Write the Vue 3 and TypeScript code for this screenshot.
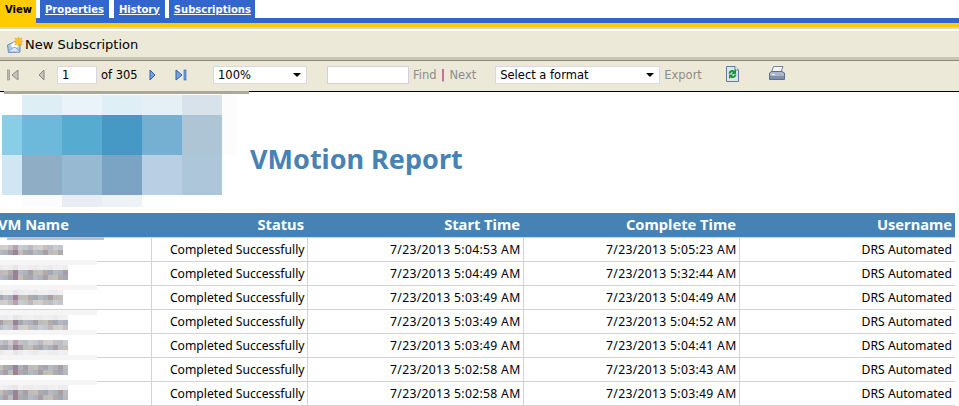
<script setup lang="ts">
const tabs = ['View', 'Properties', 'History', 'Subscriptions']
const logo = [
  '#fff', '#deeef5', '#ebf3fa', '#deeff6', '#e5eff6', '#d7e2ea', '#fcfcfc',
  '#88cee6', '#6cb9dc', '#55abd0', '#4799c5', '#75b0d2', '#aec5d5', '#fcfcfc',
  '#d0e6f3', '#8fadc5', '#98b9d2', '#7ba4c4', '#b9cfe4', '#adc6d9', '#fff',
  '#fff', '#fbfcfe', '#e9ecf2', '#eef1f6', '#fefefe', '#fff', '#fff',
]
const rows = [
  { start: '7/23/2013 5:04:53 AM', end: '7/23/2013 5:05:23 AM', band: -1, bandH: 3, top: 7, cols: 13, tones: [1, 0] },
  { start: '7/23/2013 5:04:49 AM', end: '7/23/2013 5:32:44 AM', band: -2, bandH: 5, top: 3, cols: 14, tones: [3, 0, 0] },
  { start: '7/23/2013 5:03:49 AM', end: '7/23/2013 5:04:49 AM', band: -1, bandH: 5, top: 4, cols: 13, tones: [3, 0, 1] },
  { start: '7/23/2013 5:03:49 AM', end: '7/23/2013 5:04:52 AM', band: 0, bandH: 5, top: 5, cols: 14, tones: [3, 0, 1] },
  { start: '7/23/2013 5:03:49 AM', end: '7/23/2013 5:04:41 AM', band: -4, bandH: 5, top: 6, cols: 14, tones: [1, 0, 3] },
  { start: '7/23/2013 5:02:58 AM', end: '7/23/2013 5:03:43 AM', band: -3, bandH: 5, top: 7, cols: 14, tones: [0, 0] },
  { start: '7/23/2013 5:02:58 AM', end: '7/23/2013 5:03:49 AM', band: -2, bandH: 5, top: 3, cols: 14, tones: [3, 0, 0] },
]
const base: [number, number, number][] = [
  [190, 188, 186], [172, 178, 190], [160, 168, 180], [196, 190, 184], [168, 158, 166], [182, 186, 192], [176, 170, 168],
]
function shade(row: number, line: number, col: number, tone: number): string {
  const b = col === 3 ? ([156, 130, 150] as [number, number, number]) : base[(col * 3 + row * 2 + line * 5) % base.length]
  const mix = tone * 0.26
  const [r, g, c] = b.map((v) => Math.round(v + (255 - v) * mix))
  return `rgb(${r},${g},${c})`
}
function cells(n: number): string[] {
  const row = rows[n]
  const out: string[] = []
  row.tones.forEach((tone, line) => {
    for (let c = 0; c < row.cols; c++) out.push(shade(n, line, c, tone))
  })
  return out
}
</script>

<template>
  <div class="page">
    <nav class="tabs">
      <a v-for="(t, i) in tabs" :key="t" class="tab" :class="{ active: i === 0 }">{{ t }}</a>
    </nav>
    <div class="rule-blue"></div>
    <div class="rule-gold"></div>
    <div class="rule-tan"></div>
    <div class="sub-bar">
      <svg class="sub-icon" width="16" height="16" viewBox="0 0 16 16">
        <path d="M.5 8 L8 4.5 L13 7 V15 L1.5 15.5 Z" fill="#a9c6e4" stroke="#6a8db5" />
        <path d="M3 8.5 L7 5 L11 6 L12 10 L7 12 Z" fill="#f6f8fb" stroke="#b8c8da" stroke-width=".6" />
        <path d="M1 15 L6.5 10.5 L8.5 10.5 L13 15 Z" fill="#d9e7f5" stroke="#7d9cc0" stroke-width=".8" />
        <path d="M11.5 0 L12.5 2 L15 1 L14 3.5 L16 4.5 L14 5.5 L15 8 L12.5 7 L11.5 9 L10.5 7 L8 8 L9 5.5 L7 4.5 L9 3.5 L8 1 L10.5 2 Z" fill="#ffc421" stroke="#ef9f12" stroke-width=".5" />
      </svg>
      <span>New Subscription</span>
    </div>
    <div class="rule-soft"></div>
    <div class="rule-dark"></div>
    <div class="tool-bar">
      <svg class="nav first" width="12" height="12" viewBox="0 0 12 12"><rect x="0.5" y="1" width="2" height="10" fill="#b9b9b0" stroke="#8a8a80" stroke-width=".6"/><path d="M11 1 V11 L5 6 Z" fill="#c5c5bb" stroke="#8a8a80"/></svg>
      <svg class="nav prev" width="7" height="12" viewBox="0 0 7 12"><path d="M6 1 V11 L1 6 Z" fill="#c5c5bb" stroke="#8a8a80"/></svg>
      <input class="page-input" value="1" />
      <span class="of">of 305</span>
      <svg class="nav next" width="7" height="12" viewBox="0 0 7 12"><path d="M1 1 V11 L6 6 Z" fill="#7aa2e0" stroke="#2a5cb0"/></svg>
      <svg class="nav last" width="12" height="12" viewBox="0 0 12 12"><path d="M1 1 V11 L7 6 Z" fill="#7aa2e0" stroke="#2a5cb0"/><rect x="9" y="1" width="2" height="10" fill="#7aa2e0" stroke="#2a5cb0" stroke-width=".6"/></svg>
      <div class="select zoom"><span>100%</span><i></i></div>
      <input class="find-input" />
      <span class="link find">Find</span>
      <span class="pipe">|</span>
      <span class="link">Next</span>
      <div class="select format"><span>Select a format</span><i></i></div>
      <span class="link export">Export</span>
      <svg class="refresh" width="13" height="16" viewBox="0 0 13 16">
        <path d="M.5 .5 H9 L12.5 4 V15.5 H.5 Z" fill="#dbe5f0" stroke="#5f7c9c"/>
        <path d="M9 .5 V4 H12.5" fill="#fff" stroke="#5f7c9c"/>
        <path d="M2.5 7.5 A4 4 0 0 1 8.5 4.5 L10 3 V8 H5.5 L7 6.5 A2 2 0 0 0 4.5 7.8 Z" fill="#14983a"/>
        <path d="M10.5 8.5 A4 4 0 0 1 4.5 11.5 L3 13 V8.5 H7.5 L6 10 A2 2 0 0 0 8.5 8.5 Z" fill="#14983a"/>
      </svg>
      <svg class="print" width="16" height="15" viewBox="0 0 16 15">
        <path d="M4.5 .5 H14 L12 6 H2.5 Z" fill="#f2f4f8" stroke="#76879c"/>
        <path d="M.5 7 L2.5 5.5 H13 L15.5 7 V13.5 H.5 Z" fill="#aab8cc" stroke="#5d6f88"/>
        <rect x="1" y="10" width="14" height="3" fill="#7e90aa"/>
        <rect x="3" y="8" width="3" height="1" fill="#f2f4f8"/>
      </svg>
    </div>
    <div class="rule-black"></div>
    <div class="rule-shadow"></div>
    <main>
      <div class="head">
        <div class="logo">
          <b v-for="(c, i) in logo" :key="i" :style="{ background: c }"></b>
        </div>
        <h1>VMotion Report</h1>
      </div>
      <table>
        <colgroup>
          <col class="c1" /><col class="c2" /><col class="c3" /><col class="c4" /><col class="c5" />
        </colgroup>
        <thead>
          <tr>
            <th class="name-head">VM Name</th>
            <th>Status</th>
            <th>Start Time</th>
            <th>Complete Time</th>
            <th>Username</th>
          </tr>
        </thead>
        <tbody>
          <tr v-for="(r, n) in rows" :key="n">
            <td class="name">
              <div
                class="band"
                :class="{ first: n === 0 }"
                :style="{ top: r.band + 'px', height: r.bandH + 'px' }"
              ></div>
              <div
                class="blur"
                :style="{ top: r.top + 'px', gridTemplateColumns: `repeat(${r.cols}, 5px)` }"
              >
                <b v-for="(c, i) in cells(n)" :key="i" :style="{ background: c }"></b>
              </div>
            </td>
            <td>Completed Successfully</td>
            <td class="date">{{ r.start }}</td>
            <td class="date">{{ r.end }}</td>
            <td>DRS Automated</td>
          </tr>
        </tbody>
      </table>
    </main>
  </div>
</template>

<style>
html, body { margin: 0; background: #fff; }
</style>

<style scoped>
.page { width: 959px; height: 406px; overflow: hidden; font-family: "DejaVu Sans", sans-serif; color: #000; }
.tabs { display: flex; height: 18px; }
.tab { display: flex; align-items: center; height: 18px; padding: 0 5px; margin-right: 5px; background: #3366cc; color: #fff; font: bold 10px "DejaVu Sans", sans-serif; text-decoration: underline; box-sizing: border-box; }
.tab:nth-child(3) { margin-right: 4px; }
.tab:last-child { padding-right: 4px; }
.tab.active { position: relative; z-index: 1; background: #ffcc00; color: #000; text-decoration: none; width: 36px; height: 23px; padding-bottom: 5px; margin-right: 4px; }
.rule-blue { height: 5px; background: #3366cc; }
.rule-gold { height: 4px; background: #ffcc00; }
.rule-tan { height: 2px; background: #dbd7c6; margin-bottom: 2px; }
.sub-bar { height: 26px; box-sizing: border-box; padding: 1px 0 0 7px; display: flex; align-items: center; gap: 2px; background: #ece9d8; font: 13px "DejaVu Sans", sans-serif; }
.sub-icon { flex: none; }
.rule-soft { height: 3px; background: #c8c5b3; }
.rule-dark { height: 1px; background: #8b8a80; }
.tool-bar { height: 30px; box-sizing: border-box; padding-bottom: 2px; display: flex; align-items: center; background: #ece9d8; font: 11.5px "DejaVu Sans", sans-serif; }
.nav { flex: none; }
.first { margin-left: 7px; }
.prev { margin-left: 19px; }
.page-input { width: 40px; height: 18px; box-sizing: border-box; margin-left: 12px; border: 1px solid #d8d8e4; padding: 0 4px; font: 11.5px "DejaVu Sans", sans-serif; background: #fff; outline: 0; }
.of { margin-left: 4px; width: 45px; }
.next { margin-left: 3px; }
.last { margin-left: 19px; }
.select { height: 18px; box-sizing: border-box; background: #fff; border: 1px solid #d8d8e4; display: flex; align-items: center; justify-content: space-between; padding: 0 5px 0 4px; }
.select i { border: 4px solid transparent; border-top: 4px solid #000; border-bottom: 0; width: 0; height: 0; }
.zoom { width: 94px; margin-left: 26px; }
.find-input { width: 82px; height: 18px; box-sizing: border-box; margin-left: 20px; border: 1px solid #d0d0e0; background: #fff; }
.link { color: #8c8c8c; }
.find { margin-left: 4px; }
.pipe { color: #551a8b; margin: 0 4.5px; }
.format { width: 165px; margin-left: 19px; }
.export { margin-left: 4px; }
.refresh { flex: none; margin-left: 24px; margin-top: -3px; }
.print { flex: none; margin-left: 30px; margin-top: -3px; }
.rule-black { height: 1px; background: #000; }
.rule-shadow { height: 3px; width: 245px; margin: -1px 0 0 4px; background: #aca899; position: relative; }
.head { display: flex; align-items: flex-start; margin-top: 1px; height: 118px; padding-left: 2px; }
.logo { display: grid; grid-template-columns: 20px repeat(5, 40px) 15px; grid-template-rows: 20px 40px 40px 12px; flex: none; }
h1 { margin: 46px 0 0 13px; font: bold 27px/36px "Noto Sans", sans-serif; color: #4682b4; }
table { width: 955px; table-layout: fixed; border-collapse: collapse; font: 12.2px "Noto Sans", sans-serif; }
.c1 { width: 151px; } .c2 { width: 156px; } .c3 { width: 216px; } .c4 { width: 216px; } .c5 { width: 216px; }
th { height: 24px; padding: 0 3px 1px 0; background: #4682b4; color: #fff; text-align: right; font: bold 14.67px "Noto Sans", sans-serif; box-sizing: border-box; border-bottom: 1px solid #d3d3d3; }
.name-head { text-align: left; text-indent: -2px; }
td { height: 24px; padding: 0 2px 0 0; box-sizing: border-box; text-align: right; border-bottom: 1px solid #d3d3d3; border-right: 1px solid #d3d3d3; }
td:last-child { border-right: 0; padding-right: 3px; }
.date { letter-spacing: .3px; }
.name { padding: 0; position: relative; }
.band { position: absolute; left: 0; width: 97px; background: #f5f5f5; }
.band.first { background: #b0c4d8; }
.blur { position: absolute; left: -2px; display: grid; grid-auto-rows: 5px; }
</style>
